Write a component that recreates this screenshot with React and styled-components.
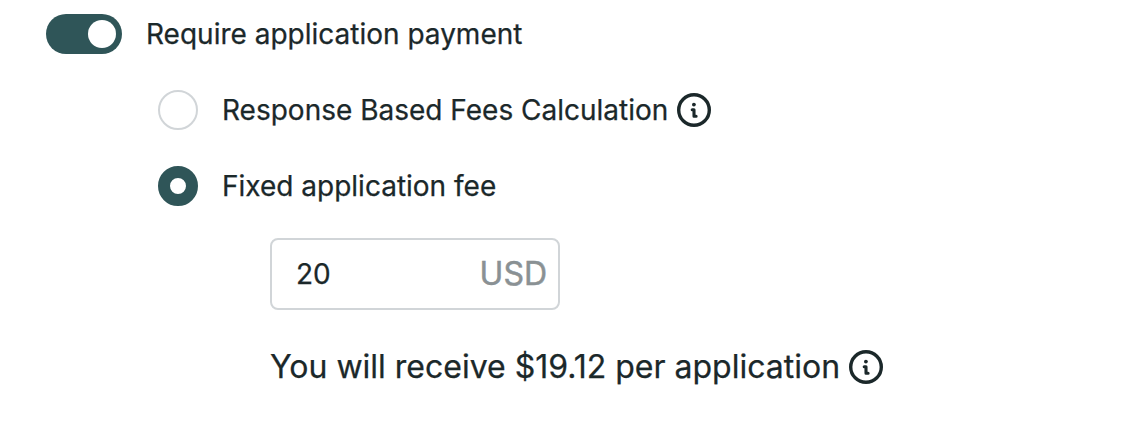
import React from "react";
import styled, { createGlobalStyle } from "styled-components";

const Global = createGlobalStyle`
  * { box-sizing: border-box; }
  body {
    margin: 0;
    background: #fff;
    color: #1b282a;
    font-family: Inter, "Liberation Sans", sans-serif;
    -webkit-text-stroke: 0.25px currentColor;
  }
`;

const Panel = styled.form`
  display: flex;
  flex-direction: column;
  align-items: flex-start;
  height: 446px;
  padding: 14px 46px;
`;

const Row = styled.div`
  display: flex;
  align-items: center;
  height: 40px;
  gap: 24px;
`;

const Toggle = styled.button`
  display: flex;
  justify-content: flex-end;
  align-items: center;
  width: 76px;
  height: 40px;
  padding: 0 6px;
  border: 0;
  border-radius: 20px;
  background: #2f5558;
`;

const Knob = styled.span`
  width: 28px;
  height: 28px;
  border-radius: 50%;
  background: #fff;
`;

const Options = styled.div`
  display: flex;
  flex-direction: column;
  gap: 36px;
  margin: 36px 0 0 112px;
`;

const Radio = styled.span`
  width: 40px;
  height: 40px;
  border-radius: 50%;
  background: #fff;
  border: ${(p) => (p.$checked ? "12px solid #2f5558" : "2px solid #d1d5d8")};
`;

const Label = styled.span`
  display: flex;
  align-items: center;
  gap: 9px;
  font-size: 28px;
  line-height: 40px;
  white-space: nowrap;
`;

const Details = styled.div`
  margin: 32px 0 0 224px;
`;

const AmountField = styled.div`
  display: flex;
  align-items: center;
  justify-content: space-between;
  width: 290px;
  height: 72px;
  padding: 0 11px 0 24px;
  border: 2px solid #d1d5d8;
  border-radius: 8px;
`;

const Amount = styled.span`
  font-size: 28px;
`;

const Currency = styled.span`
  padding-bottom: 2px;
  font-size: 32px;
  color: #8a9194;
  -webkit-text-stroke-width: 0.5px;
`;

const Payout = styled.div`
  display: flex;
  align-items: center;
  gap: 9px;
  margin-top: 37px;
  font-size: 32px;
  line-height: 40px;
  white-space: nowrap;
`;

const InfoSvg = styled.svg`
  flex: none;
  width: 34px;
  height: 34px;
`;

const InfoIcon = () => (
  <InfoSvg viewBox="0 0 34 34" fill="none" stroke="currentColor">
    <circle cx="17" cy="17" r="15.3" strokeWidth="3.4" />
    <circle cx="16.9" cy="11.6" r="1.9" fill="currentColor" stroke="none" />
    <path
      d="M15.2 16.8h1.8v6.5h2.1"
      strokeWidth="3.1"
      strokeLinecap="round"
      strokeLinejoin="round"
    />
  </InfoSvg>
);

export default function App() {
  return (
    <>
      <Global />
      <Panel>
        <Row>
          <Toggle type="button" role="switch" aria-checked="true">
            <Knob />
          </Toggle>
          <Label>Require application payment</Label>
        </Row>
        <Options role="radiogroup">
          <Row>
            <Radio role="radio" aria-checked="false" />
            <Label>
              Response Based Fees Calculation
              <InfoIcon />
            </Label>
          </Row>
          <Row>
            <Radio role="radio" aria-checked="true" $checked />
            <Label>Fixed application fee</Label>
          </Row>
        </Options>
        <Details>
          <AmountField>
            <Amount>20</Amount>
            <Currency>USD</Currency>
          </AmountField>
          <Payout>
            You will receive $19.12 per application
            <InfoIcon />
          </Payout>
        </Details>
      </Panel>
    </>
  );
}
